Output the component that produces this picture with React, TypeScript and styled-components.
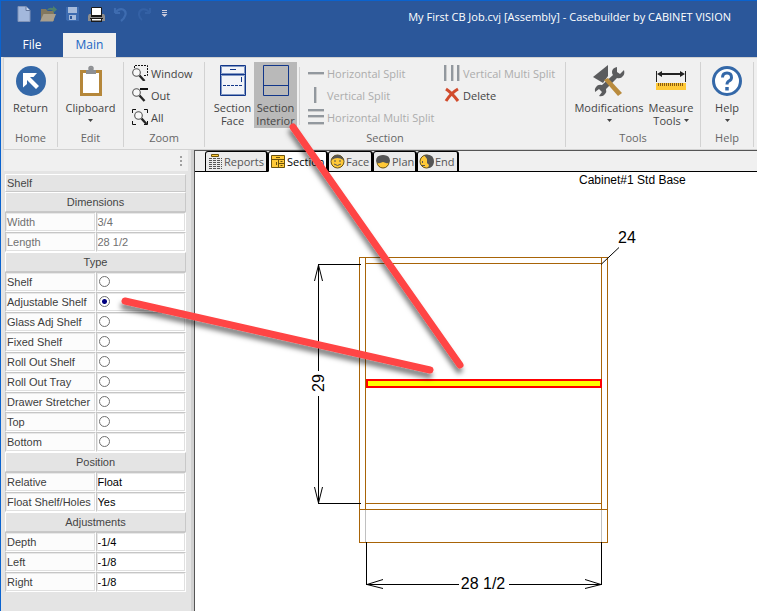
import React from "react";
import styled, { createGlobalStyle } from "styled-components";

const GlobalStyle = createGlobalStyle`
  * { box-sizing: border-box; }
  html, body, #root { height: 100%; margin: 0; }
  body {
    font-family: "Open Sans", "Noto Sans", sans-serif;
    font-size: 11px;
    color: #444;
    background: #e4e4e4;
  }
  button, input, select { font: inherit; color: inherit; }
`;

const Window = styled.div`
  position: relative;
  display: flex;
  flex-direction: column;
  min-height: 100vh;
  border-top: 1px solid #0a63cf;
  border-left: 1px solid #0a63cf;
  overflow: hidden;
`;

const Header = styled.header`
  background: #2b579a;
  color: #fff;
`;

const TitleBar = styled.div`
  display: flex;
  align-items: flex-start;
  height: 32px;
  padding: 0 26px 0 11px;
`;

const QuickButton = styled.button`
  display: flex;
  align-items: center;
  justify-content: center;
  flex: none;
  width: 24px;
  height: 26px;
  padding: 0;
  border: 0;
  background: none;
`;

const QuickMore = styled(QuickButton)`
  width: 16px;
`;

const Title = styled.h1`
  flex: 1;
  margin: 0;
  font-size: 11px;
  font-weight: 400;
  line-height: 32px;
  text-align: right;
  white-space: nowrap;
`;

const MenuTabs = styled.nav`
  display: flex;
  height: 24px;
`;

const MenuTab = styled.button<{ $active?: boolean }>`
  width: ${(p) => (p.$active ? "53px" : "62px")};
  padding: 0;
  border: 0;
  background: ${(p) => (p.$active ? "#f0f0f0" : "transparent")};
  color: ${(p) => (p.$active ? "#1a66c4" : "#fff")};
  font-size: 12px;
  line-height: 24px;
`;

const Ribbon = styled.div`
  display: flex;
  height: 93px;
  margin-left: 2px;
  padding: 4px 0 2px;
  background: #f0f0f0;
  border: solid #d2d2d2;
  border-width: 1px 0 1px 1px;
`;

const Group = styled.section<{ $width: number }>`
  display: flex;
  flex-direction: column;
  flex: none;
  width: ${(p) => p.$width}px;
  border-right: 1px solid #d2d2d2;
`;

const GroupBody = styled.div`
  display: flex;
  justify-content: center;
  height: 68px;
`;

const GroupLabel = styled.h2`
  margin: 0;
  color: #666;
  font-size: 11px;
  font-weight: 400;
  line-height: 16px;
  text-align: center;
`;

const BigButton = styled.button<{ $pressed?: boolean; $width: number }>`
  display: flex;
  flex-direction: column;
  align-items: center;
  flex: none;
  width: ${(p) => p.$width}px;
  height: 66px;
  padding: 3px 0 0;
  border: 0;
  background: ${(p) => (p.$pressed ? "#b9b9b9" : "transparent")};
  line-height: 13px;
  white-space: nowrap;

  > svg { flex: none; margin-bottom: 4px; }
`;

const Line = styled.span`
  display: flex;
  align-items: center;
  gap: 3px;
  height: 13px;
`;

const Stack = styled.div<{ $width: number }>`
  display: flex;
  flex-direction: column;
  flex: none;
  width: ${(p) => p.$width}px;
`;

const SmallButton = styled.button`
  display: flex;
  align-items: center;
  gap: 3px;
  height: 22px;
  padding: 0;
  border: 0;
  background: none;
  white-space: nowrap;

  &:disabled { color: #acacac; }
  > svg { flex: none; }
`;

const Divider = styled.div`
  width: 1px;
  height: 58px;
  margin: 5px 8px 0 2px;
  background: #d2d2d2;
`;

const Workspace = styled.main`
  display: flex;
  flex: 1;
`;

const SidePanel = styled.aside`
  flex: none;
  width: 193px;
  padding: 0 5px 0 4px;
  border-right: 3px solid #d0d0d0;
  background: #e4e4e4;
`;

const Grip = styled.div`
  display: flex;
  justify-content: flex-end;
  align-items: center;
  height: 21px;
  margin: 0 -2px 3px -1px;
  padding-right: 6px;
  background: #f0f0f0;
`;

const Properties = styled.table`
  width: 100%;
  border-collapse: separate;
  border-spacing: 0;
  table-layout: fixed;
  font-family: "Liberation Sans", Arial, sans-serif;
  font-size: 11px;

  td, th { height: 20px; padding: 0 1px; font-weight: 400; white-space: nowrap; }
  label { display: block; line-height: 16px; }
`;

const PanelTitle = styled.caption`
  height: 18px;
  padding-left: 1px;
  border: solid;
  border-width: 1px;
  border-color: #fff #c8c8c8 #c8c8c8 #fff;
  line-height: 16px;
  text-align: left;
`;

const SectionHead = styled.th`
  border: 1px solid;
  border-color: #fff #c8c8c8 #c8c8c8 #fff;
  background: #e4e4e4;
`;

const Cell = styled.td<{ $label?: boolean; $dim?: boolean; $strong?: boolean }>`
  border: 1px solid;
  border-color: #c6c6c6 #fff #fff #c6c6c6;
  background: ${(p) => (p.$label ? "#fcfcfc" : "#fff")};
  box-shadow: inset 1px 1px #e8e8e8, inset -1px -1px #e0e0e0;
  color: ${(p) => (p.$strong ? "#000" : p.$dim ? "#707070" : "#3c3c3c")};
`;

const ValueInput = styled.input`
  display: block;
  width: 100%;
  height: 16px;
  padding: 0;
  border: 0;
  outline: 0;
  background: none;
  appearance: none;
`;

const Radio = styled.input`
  display: block;
  width: 11px;
  height: 11px;
  margin: 0 0 1px 1px;
  appearance: none;
  border: 1px solid #707070;
  border-radius: 50%;
  background: #fff;

  &:checked { background: radial-gradient(circle, #000080 0 2px, #fff 3px); }
`;

const Canvas = styled.section`
  display: flex;
  flex: 1;
  flex-direction: column;
  min-width: 0;
  border-left: 1px solid #555;
  border-top: 1px solid #555;
  background: #fff;
`;

const ViewTabs = styled.div`
  display: flex;
  align-items: flex-end;
  height: 21px;
  padding-left: 10px;
  background: #f0f0f0;
  box-shadow: inset 0 -1px #000;
`;

const ViewTab = styled.button<{ $active?: boolean; $width: number }>`
  display: flex;
  align-items: center;
  gap: 1px;
  flex: none;
  width: ${(p) => p.$width}px;
  height: 21px;
  padding: 0 0 0 1px;
  border: 1px solid #000;
  border-right-width: 2px;
  border-bottom-color: ${(p) => (p.$active ? "#fff" : "#000")};
  border-radius: 3px 3px 0 0;
  background: ${(p) => (p.$active ? "#fff" : "#ebebeb")};
  color: ${(p) => (p.$active ? "#000" : "#555")};
  white-space: nowrap;

  > svg { flex: none; }
`;

const Drawing = styled.svg`
  display: block;
  flex: none;
  font-family: "Liberation Sans", Arial, sans-serif;
`;

const Callouts = styled.svg`
  position: absolute;
  top: -1px;
  left: -1px;
  pointer-events: none;
`;

const DropArrow = () => (
  <svg width="5" height="3" viewBox="0 0 5 3"><path d="M0 0h5L2.5 3z" fill="#444" /></svg>
);

const NewIcon = () => (
  <svg width="14" height="16" viewBox="0 0 14 16">
    <path d="M1 .5h8l4 4v11H1z" fill="#a3b8dc" stroke="#8194b8" /><path d="M9 .5v4h4" fill="#cfdbee" stroke="#64779c" />
  </svg>
);
const OpenIcon = () => (
  <svg width="17" height="16" viewBox="0 0 17 16">
    <path d="M1 15V3h5l1.500 2H14v10z" fill="#83785f" /><path d="M0 15.500 3.500 8H16l-3 7.500z" fill="#a99f8d" />
    <path d="M7 4.500Q8 1 13 2V0l4 3.500L13 7V5Q10 3 7 4.500z" fill="#4f806e" />
  </svg>
);
const SaveIcon = () => (
  <svg width="13" height="14" viewBox="0 0 13 14">
    <path d="M0 0h13v14H1.500L0 12.500z" fill="#3c6bb0" /><path d="M2 0h9v6H2z" fill="#a6bbdb" /><path d="M3 8h7v5H3z" fill="#a6bbdb" /><path d="M4 9h2v3H4z" fill="#2b579a" />
  </svg>
);
const PrintIcon = () => (
  <svg width="17" height="15" viewBox="0 0 17 15">
    <path d="M1 7h15l1 2v5H0V9z" fill="#8c8c8c" /><path d="M3.500.5h10v8h-10z" fill="#fff" stroke="#1a1a1a" /><path d="M3 8h11v2H3zM2 11h13v1H2z" fill="#171717" /><path d="M3 12h11v3H3z" fill="#1a1a1a" /><path d="M4 12h9v1.500H4z" fill="#fff" />
  </svg>
);
const UndoIcon = () => (
  <svg width="15" height="15" viewBox="0 0 15 15" fill="none" stroke="#3e6cb0" strokeWidth="2.200">
    <path d="M2 6h5M2 6V1M2 6Q6 1 10 2.500C15 5 12 11 8 14" />
  </svg>
);
const RedoIcon = () => (
  <svg width="15" height="15" viewBox="0 0 15 15" fill="none" stroke="#3461a5" strokeWidth="2">
    <path d="M13 6H8M13 6V1M13 6Q9 1 5 2.500C0 5 2 11 5 13" />
  </svg>
);
const MoreIcon = () => (
  <svg width="7" height="8" viewBox="0 0 7 8"><path d="M1 .5h5M1 2.500h5" stroke="#ccd" /><path d="M.5 4h6L3.500 7z" fill="#ccd" /></svg>
);

const ReturnIcon = () => (
  <svg width="32" height="32" viewBox="0 0 32 32">
    <circle cx="16" cy="16" r="15" fill="#3468a8" />
    <path d="M8 8h14l-3.500 4H15l9 9-3 3-9-9v4l-4 3.500z" fill="#fff" />
  </svg>
);
const ClipboardIcon = () => (
  <svg width="24" height="32" viewBox="0 0 24 32">
    <path d="M1 5h22v26H1z" fill="#b5873a" /><path d="M4 8h16v20H4z" fill="#fff" />
    <path d="M7 9V5h3a2 3 0 0 1 4 0h3v4z" fill="#8d8f92" /><circle cx="12" cy="3.500" r="2" fill="none" stroke="#8d8f92" strokeWidth="1.500" />
  </svg>
);

const Lens = ({ x = 0, y = 0 }: { x?: number; y?: number }) => (
  <g transform={`translate(${x} ${y})`}>
    <path d="m7.500 7.500 5 5.500" stroke="#262626" strokeWidth="2.400" /><circle cx="4.500" cy="4.500" r="3.800" fill="#f8f8f8" stroke="#555" strokeWidth="1.100" />
  </g>
);
const ZoomWindowIcon = () => (
  <svg width="16" height="16" viewBox="0 0 16 16"><path d="M2.500 3V.5h13v10H11" fill="none" stroke="#111" strokeDasharray="2 1" /><Lens y={3} /></svg>
);
const ZoomOutIcon = () => (
  <svg width="16" height="16" viewBox="0 0 16 16"><path d="M8 2h8" stroke="#111" strokeWidth="2" /><Lens y={1} /></svg>
);
const ZoomAllIcon = () => (
  <svg width="16" height="16" viewBox="0 0 16 16"><path d="M.5 4V.5H4M12 .5h3.500V4M15.500 12v3.500H12M4 15.500H.5V12" fill="none" stroke="#111" /><Lens x={2} y={2} /></svg>
);

const FaceCabinetIcon = () => (
  <svg width="26" height="32" viewBox="0 0 26 32">
    <path d="M.5.5h25v30H.5z" fill="#f2f4f8" stroke="#12378a" />
    <path d="M1.500 1.500h23v7h-23zM1.500 10.500h23v19h-23z" fill="none" stroke="#8198c3" />
    <path d="M0 9.500h26M10 4.500h6M21.500 12v5" stroke="#12378a" /><path d="M3 20.500h20" stroke="#12378a" strokeDasharray="3 1" />
  </svg>
);
const InteriorIcon = () => (
  <svg width="26" height="32" viewBox="0 0 26 32"><path d="M.5.5h25v30H.5zM0 20.500h26" fill="none" stroke="#12378a" /></svg>
);
const HorizontalIcon = () => (
  <svg width="16" height="16" viewBox="0 0 16 16"><path d="M0 8h16" stroke="#92989e" strokeWidth="2" /><path d="M0 9.500h16" stroke="#ccc" /></svg>
);
const VerticalIcon = () => (
  <svg width="16" height="16" viewBox="0 0 16 16"><path d="M7 0v16" stroke="#92989e" strokeWidth="2" /><path d="M8.500 0v16" stroke="#ccc" /></svg>
);
const HorizontalMultiIcon = () => (
  <svg width="16" height="16" viewBox="0 0 16 16"><path d="M0 1h16M0 7h16M0 14h16" stroke="#92989e" strokeWidth="2" /><path d="M0 2.500h16M0 8.500h16M0 15.500h16" stroke="#ccc" /></svg>
);
const VerticalMultiIcon = () => (
  <svg width="16" height="16" viewBox="0 0 16 16"><path d="M1 0v16M8 0v16M14 0v16" stroke="#92989e" strokeWidth="2" /><path d="M2.500 0v16M9.500 0v16M15.500 0v16" stroke="#ccc" /></svg>
);
const DeleteIcon = () => (
  <svg width="16" height="16" viewBox="0 0 16 16"><path d="M2 2q6 4 12 12M14 2Q7 6 2 14" fill="none" stroke="#d14b2c" strokeWidth="3" /></svg>
);
const ToolsIcon = () => (
  <svg width="32" height="32" viewBox="0 0 32 32">
    <path d="M24 2q-5 1-5 5 0 2 1 3L9 20q-4-1-6 2-2 2-1 5l4-3 3 3-3 4q4 1 6-2 2-2 1-5l11-11q4 1 6-2 2-2 1-6l-4 4-3-2z" fill="#5b5c5e" />
    <path d="M15 0v11l-5 7L0 12z" fill="#5b5c5e" /><path d="m11 15 4-2 14 15-4 3z" fill="#b98b3d" />
  </svg>
);
const MeasureIcon = () => (
  <svg width="30" height="32" viewBox="0 0 30 32">
    <path d="M.5 6v11M29.500 6v11" stroke="#222" /><path d="M3 9h24" stroke="#222" strokeWidth="2" /><path d="m1 9 5-3v6zM29 9l-5-3v6z" fill="#222" />
    <path d="M0 18h30v7H0z" fill="#ffc937" /><path d="M2 19.500h26" stroke="#8b5c13" strokeWidth="3" strokeDasharray="1 1" />
  </svg>
);
const HelpIcon = () => (
  <svg width="32" height="32" viewBox="0 0 32 32" fill="none" stroke="#3468a8">
    <circle cx="16" cy="16" r="13.500" fill="#fff" strokeWidth="3" /><path d="M11.500 12.500Q11.500 8 16 8t4.500 4.500Q20.500 15 18 16q-2 1-2 3.500" strokeWidth="3" /><path d="M16 22v3.500" strokeWidth="3.500" />
  </svg>
);

const ReportsIcon = () => (
  <svg width="16" height="16" viewBox="0 0 16 16">
    <path d="M4.500.5h7v2h-7z" fill="#ffc937" stroke="#6b520c" />
    <path d="M2 4.500h13M2 6.500h13M2 8.500h13M2 10.500h13M2 12.500h13M2 14.500h13" stroke="#555" strokeDasharray="3 1" />
  </svg>
);
const SectionIcon = () => (
  <svg width="16" height="15" viewBox="0 0 16 15">
    <path d="M1.500 1.500h13v12h-13zM1.500 5.500h13M8.500 5.500v8M8.500 9.500h6" fill="#ffc937" stroke="#6b520c" /><path d="M6 3.500h4M10.500 7.500h2M10.500 11.500h2M6.500 8v3" stroke="#6b520c" />
  </svg>
);
const FaceIcon = () => (
  <svg width="15" height="15" viewBox="0 0 15 15"><circle cx="7.500" cy="7.500" r="6.500" fill="#ffc937" stroke="#6b520c" /><path d="M1.500 6Q3 1 7.500 1t6 5Q7.500 2 1.500 6z" fill="#555" /><path d="M4 7h2M9 7h2M4 10q3.500 3 7 0" fill="none" stroke="#555" /></svg>
);
const PlanIcon = () => (
  <svg width="16" height="15" viewBox="0 0 16 15"><circle cx="8" cy="8" r="6" fill="#ffc937" stroke="#6b520c" /><path d="M1 7Q1 1 8 1t7 6q-1 3-4 2L8 8 5 9Q2 10 1 7z" fill="#555" /></svg>
);
const EndIcon = () => (
  <svg width="15" height="15" viewBox="0 0 15 15"><circle cx="7.500" cy="7.500" r="6.500" fill="#ffc937" stroke="#6b520c" /><path d="M5 1q10-2 10 7-1 6-6 6l1-3-2-2V5z" fill="#555" /><path d="M3.500 7v2M3 11.500h3" stroke="#555" /></svg>
);

type PropertyRow = { name: string; value?: string; dim?: boolean; checked?: boolean };
type PropertySection = { title: string; rows: PropertyRow[] };

const sections: PropertySection[] = [
  { title: "Dimensions", rows: [{ name: "Width", value: "3/4", dim: true }, { name: "Length", value: "28 1/2", dim: true }] },
  {
    title: "Type",
    rows: [
      { name: "Shelf" }, { name: "Adjustable Shelf", checked: true }, { name: "Glass Adj Shelf" }, { name: "Fixed Shelf" },
      { name: "Roll Out Shelf" }, { name: "Roll Out Tray" }, { name: "Drawer Stretcher" }, { name: "Top" }, { name: "Bottom" },
    ],
  },
  { title: "Position", rows: [{ name: "Relative", value: "Float" }, { name: "Float Shelf/Holes", value: "Yes" }] },
  { title: "Adjustments", rows: [{ name: "Depth", value: "-1/4" }, { name: "Left", value: "-1/8" }, { name: "Right", value: "-1/8" }] },
];

const HalfColumn = styled.col`
  width: 50%;
`;

const PropertyTable = () => (
  <Properties>
    <PanelTitle>Shelf</PanelTitle>
    <colgroup><HalfColumn /><HalfColumn /></colgroup>
    {sections.map((section) => (
      <tbody key={section.title}>
        <tr><SectionHead colSpan={2} scope="rowgroup">{section.title}</SectionHead></tr>
        {section.rows.map((row) => {
          const id = `${section.title}-${row.name}`.replace(/\W+/g, "-");
          return (
            <tr key={row.name}>
              <Cell $label $dim={row.dim}><label htmlFor={id}>{row.name}</label></Cell>
              <Cell $dim={row.dim} $strong={!row.dim}>
                {row.value ? (
                  <ValueInput id={id} type="text" defaultValue={row.value} readOnly={row.dim} />
                ) : (
                  <Radio id={id} type="radio" name="shelf-type" defaultChecked={row.checked} />
                )}
              </Cell>
            </tr>
          );
        })}
      </tbody>
    ))}
  </Properties>
);

const CabinetDrawing = () => (
  <Drawing width="562" height="439" viewBox="195 172 562 439" role="img" aria-label="Cabinet section">
    <g fill="none" shapeRendering="crispEdges">
      <path d="M365.500 510v32M601.500 510v32" stroke="#c0c0c0" />
      <path d="M359.500 257.500h248v285h-248zM365.500 258v251M601.500 258v251M365.500 263.500h236M365.500 503.500h236M359.500 509.500h248" stroke="#a86408" />
      <path d="M367 380h234v7H367z" fill="#ff0" stroke="#f00" strokeWidth="2" />
      <path d="M318.500 371V264.500H361M318.500 396v107.500H361M366.500 542v43M601.500 542v43M367 584.500h92M509 584.500h93" stroke="#000" />
    </g>
    <g fill="none" stroke="#000">
      <path d="m314.500 281 4-16 4 16M314.500 487l4 16 4-16M383 579.500l-16 5 16 4M585 579.500l16 5-16 4M601 264.500l18-17" />
    </g>
    <g fill="#000" fontSize="16">
      <text x="618" y="243">24</text>
      <text x="483" y="589" textAnchor="middle">28 1/2</text>
      <text transform="translate(324 383) rotate(-90)" textAnchor="middle">29</text>
      <text x="579" y="184" fontSize="12">Cabinet#1 Std Base</text>
    </g>
  </Drawing>
);

export default function App() {
  return (
    <Window>
      <GlobalStyle />
      <Header>
        <TitleBar>
          <QuickButton aria-label="New"><NewIcon /></QuickButton>
          <QuickButton aria-label="Open"><OpenIcon /></QuickButton>
          <QuickButton aria-label="Save"><SaveIcon /></QuickButton>
          <QuickButton aria-label="Print"><PrintIcon /></QuickButton>
          <QuickButton aria-label="Undo"><UndoIcon /></QuickButton>
          <QuickButton aria-label="Redo"><RedoIcon /></QuickButton>
          <QuickMore aria-label="Customize"><MoreIcon /></QuickMore>
          <Title>My First CB Job.cvj [Assembly] - Casebuilder by CABINET VISION</Title>
        </TitleBar>
        <MenuTabs><MenuTab>File</MenuTab><MenuTab $active>Main</MenuTab></MenuTabs>
      </Header>

      <Ribbon>
        <Group $width={54}>
          <GroupBody><BigButton $width={52}><ReturnIcon /><Line>Return</Line></BigButton></GroupBody>
          <GroupLabel>Home</GroupLabel>
        </Group>
        <Group $width={66}>
          <GroupBody><BigButton $width={62}><ClipboardIcon /><Line>Clipboard</Line><Line><DropArrow /></Line></BigButton></GroupBody>
          <GroupLabel>Edit</GroupLabel>
        </Group>
        <Group $width={81}>
          <GroupBody>
            <Stack $width={64}>
              <SmallButton><ZoomWindowIcon />Window</SmallButton>
              <SmallButton><ZoomOutIcon />Out</SmallButton>
              <SmallButton><ZoomAllIcon />All</SmallButton>
            </Stack>
          </GroupBody>
          <GroupLabel>Zoom</GroupLabel>
        </Group>
        <Group $width={361}>
          <GroupBody>
            <BigButton $width={43}><FaceCabinetIcon /><Line>Section</Line><Line>Face</Line></BigButton>
            <BigButton $width={43} $pressed><InteriorIcon /><Line>Section</Line><Line>Interior</Line></BigButton>
            <Divider />
            <Stack $width={136}>
              <SmallButton disabled><HorizontalIcon />Horizontal Split</SmallButton>
              <SmallButton disabled><VerticalIcon />Vertical Split</SmallButton>
              <SmallButton disabled><HorizontalMultiIcon />Horizontal Multi Split</SmallButton>
            </Stack>
            <Stack $width={115}>
              <SmallButton disabled><VerticalMultiIcon />Vertical Multi Split</SmallButton>
              <SmallButton><DeleteIcon />Delete</SmallButton>
            </Stack>
          </GroupBody>
          <GroupLabel>Section</GroupLabel>
        </Group>
        <Group $width={135}>
          <GroupBody>
            <BigButton $width={76}><ToolsIcon /><Line>Modifications</Line><Line><DropArrow /></Line></BigButton>
            <BigButton $width={48}><MeasureIcon /><Line>Measure</Line><Line>Tools <DropArrow /></Line></BigButton>
          </GroupBody>
          <GroupLabel>Tools</GroupLabel>
        </Group>
        <Group $width={53}>
          <GroupBody><BigButton $width={48}><HelpIcon /><Line>Help</Line><Line><DropArrow /></Line></BigButton></GroupBody>
          <GroupLabel>Help</GroupLabel>
        </Group>
      </Ribbon>

      <Workspace>
        <SidePanel>
          <Grip><svg width="2" height="10" viewBox="0 0 2 10"><path d="M1 0v10" stroke="#a0a0a0" strokeWidth="2" strokeDasharray="2 2" /></svg></Grip>
          <PropertyTable />
        </SidePanel>
        <Canvas>
          <ViewTabs role="tablist">
            <ViewTab role="tab" $width={63}><ReportsIcon />Reports</ViewTab>
            <ViewTab role="tab" $width={60} $active aria-selected><SectionIcon />Section</ViewTab>
            <ViewTab role="tab" $width={45}><FaceIcon />Face</ViewTab>
            <ViewTab role="tab" $width={44}><PlanIcon />Plan</ViewTab>
            <ViewTab role="tab" $width={42}><EndIcon />End</ViewTab>
          </ViewTabs>
          <CabinetDrawing />
        </Canvas>
      </Workspace>

      <Callouts width="480" height="400" viewBox="0 0 480 400" aria-hidden="true">
        <defs>
          <filter id="callout-shadow" x="-10%" y="-10%" width="120%" height="130%">
            <feDropShadow dx="-1" dy="5" stdDeviation="2.500" floodColor="#000" floodOpacity="0.5" />
          </filter>
        </defs>
        <g stroke="#ff4444" strokeWidth="7" strokeLinecap="round" filter="url(#callout-shadow)">
          <path d="M293 127 460 365" /><path d="M125 301 430 370" />
        </g>
      </Callouts>
    </Window>
  );
}
